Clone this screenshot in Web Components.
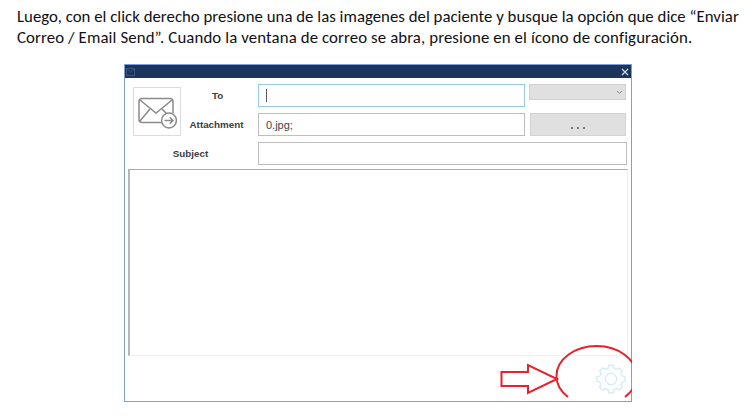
<!DOCTYPE html>
<html lang="es">
<head>
<meta charset="utf-8">
<title>Enviar Correo</title>
<style>
    html, body { margin: 0; background: #fff; }
    body { width: 750px; height: 416px; overflow: hidden; }
    .line-a { letter-spacing: 0.02px; }
    .line-b { letter-spacing: 0.115px; }
</style>
</head>
<body>
<doc-page>
    <doc-text><span class="line-a">Luego, con el click derecho presione una de las imagenes del paciente y busque la opción que dice “Enviar</span><br><span class="line-b">Correo / Email Send”. Cuando la ventana de correo se abra, presione en el ícono de configuración.</span></doc-text>
    <mail-window></mail-window>
</doc-page>

<script>
class DocPage extends HTMLElement {
    constructor() {
        super();
        this.attachShadow({ mode: 'open' });
        this.shadowRoot.innerHTML = `
            <style>
                :host {
                    display: flex;
                    flex-direction: column;
                    gap: 16px;
                    padding: 7px 0 0 17px;
                    box-sizing: border-box;
                    width: 750px;
                    height: 416px;
                }
            </style>
            <slot></slot>
        `;
    }
}

class DocText extends HTMLElement {
    constructor() {
        super();
        this.attachShadow({ mode: 'open' });
        this.shadowRoot.innerHTML = `
            <style>
                :host {
                    display: block;
                    width: 728px;
                    font: 16.8px/20.5px Carlito, Lato, "Open Sans", sans-serif;
                    color: #101014;
                }
            </style>
            <slot></slot>
        `;
    }
}

class FormLabel extends HTMLElement {
    constructor() {
        super();
        this.attachShadow({ mode: 'open' });
        this.shadowRoot.innerHTML = `
            <style>
                :host {
                    display: flex;
                    align-items: center;
                    justify-content: center;
                    font: bold 9.8px "Liberation Sans", Arial, sans-serif;
                    color: #3c3c3c;
                }
            </style>
            <slot></slot>
        `;
    }
}

class FormInput extends HTMLElement {
    constructor() {
        super();
        this.attachShadow({ mode: 'open' });
        this.shadowRoot.innerHTML = `
            <style>
                :host {
                    display: flex;
                    align-items: center;
                    box-sizing: border-box;
                    padding-left: 7px;
                    border: 1px solid #bdbdbd;
                    background: #fff;
                    font: 11px "Liberation Sans", Arial, sans-serif;
                    color: #444;
                }
                :host([focused]) {
                    border-color: #93c9f2;
                }
                :host([focused])::before {
                    content: "";
                    width: 1px;
                    height: 13px;
                    background: #555;
                }
            </style>
            <slot></slot>
        `;
    }
}

class MailWindow extends HTMLElement {
    constructor() {
        super();
        this.attachShadow({ mode: 'open' });
        this.shadowRoot.innerHTML = `
            <style>
                :host {
                    display: flex;
                    flex-direction: column;
                    position: relative;
                    box-sizing: border-box;
                    width: 508px;
                    height: 338px;
                    margin-left: 107px;
                    border: 1px solid #7d9ed8;
                    background: #fff;
                }
                .title {
                    display: flex;
                    align-items: center;
                    justify-content: space-between;
                    flex: none;
                    height: 13px;
                    padding: 0 2px 0 1px;
                    background: #1b355f;
                }
                .form {
                    display: grid;
                    grid-template-columns: 48px 77px 267px 101px;
                    grid-template-rows: 23px 23px 23px;
                    row-gap: 6px;
                    column-gap: 0;
                    padding: 6px 0 0 8px;
                }
                .logo {
                    grid-row: 1 / span 2;
                    box-sizing: border-box;
                    height: 49px;
                    margin-top: 3px;
                    border: 1px solid #dcdcdc;
                    display: flex;
                    align-items: center;
                    justify-content: center;
                }
                .select {
                    margin-left: 4px;
                    height: 16px;
                    box-sizing: border-box;
                    border: 1px solid #cfcfcf;
                    background: #e0e0e0;
                    display: flex;
                    align-items: center;
                    justify-content: flex-end;
                    padding-right: 2px;
                }
                .browse {
                    margin-left: 5px;
                    box-sizing: border-box;
                    border: 1px solid #d2d2d2;
                    background: #e0e0e0;
                    display: flex;
                    align-items: flex-end;
                    justify-content: center;
                    padding-bottom: 6px;
                    gap: 4px;
                }
                .browse i {
                    width: 2px;
                    height: 2px;
                    background: #777;
                }
                .attachment-label {
                    grid-column: 2;
                    padding-right: 6px;
                }
                .subject-label {
                    grid-column: 1 / span 2;
                    padding-right: 10px;
                }
                .subject-input {
                    grid-column: 3 / span 2;
                    margin-right: -1px;
                }
                .body {
                    box-sizing: border-box;
                    flex: none;
                    height: 187px;
                    margin: 4px 3px 0 3px;
                    border-top: 1px solid #ababab;
                    border-left: 2px solid #b5b5b5;
                    border-right: 1px solid #ededed;
                    border-bottom: 1px solid #f0f0f0;
                }
                .to-label { padding: 0 4px 1px 0; }
                .marks {
                    position: absolute;
                    left: -1px;
                    top: -1px;
                    width: 508px;
                    height: 338px;
                    pointer-events: none;
                }
            </style>
            <div class="title">
                <svg width="9" height="8" viewBox="0 0 9 8" fill="none" stroke="#3c5478" stroke-width="1">
                    <rect x="0.5" y="0.5" width="8" height="7"/>
                    <path d="M0.5 0.5 L4.5 4 L8.5 0.5"/>
                </svg>
                <svg width="8" height="8" viewBox="0 0 8 8" fill="none" stroke="#d5dbe6" stroke-width="1.2">
                    <path d="M1 1 L7 7 M7 1 L1 7"/>
                </svg>
            </div>
            <div class="form">
                <div class="logo">
                    <svg width="40" height="36" viewBox="0 0 40 36" fill="none" stroke="#8b8b8b" stroke-width="1.5">
                        <path d="M26 28.500 H5 Q2 28.500 2 25.500 V7.500 Q2 4.500 5 4.500 H33 Q36 4.500 36 7.500 V19"/>
                        <path d="M3 6 L19 19 L35 6"/>
                        <path d="M3 27 L13 15 M25 15 L30 20"/>
                        <circle cx="32" cy="26.500" r="7.400" fill="#fff"/>
                        <path d="M27.500 26.500 H36 M32.800 23.300 L36 26.500 L32.800 29.700"/>
                    </svg>
                </div>
                <form-label class="to-label">To</form-label>
                <form-input focused></form-input>
                <div class="select">
                    <svg width="7" height="5" viewBox="0 0 7 5" fill="none" stroke="#888" stroke-width="1">
                        <path d="M1 1 L3.5 3.5 L6 1"/>
                    </svg>
                </div>

                <form-label class="attachment-label">Attachment</form-label>
                <form-input>0.jpg;</form-input>
                <div class="browse"><i></i><i></i><i></i></div>

                <form-label class="subject-label">Subject</form-label>
                <form-input class="subject-input"></form-input>
            </div>
            <div class="body"></div>

            <svg class="marks" viewBox="0 0 508 338" fill="none">
                <path d="M377.5 308 H404 V301 L433 315 L404 329 V322 H377.5 Z" stroke="#e8212b" stroke-width="2" fill="#fff"/>
                <g transform="translate(487 315) scale(.76) translate(-487 -315)" stroke="#d6edfb" stroke-width="2">
                    <path d="M484 297 H490 L491 301 L494 302.500 L498 300.500 L502 304.500 L500 308 L501.500 311 L505.500 312 V318 L501.500 319 L500 322 L502 325.500 L498 329.500 L494 327.500 L491 329 L490 333 H484 L483 329 L480 327.500 L476 329.500 L472 325.500 L474 322 L472.500 319 L468.500 318 V312 L472.500 311 L474 308 L472 304.500 L476 300.500 L480 302.500 L483 301 Z"/>
                    <circle cx="487" cy="315" r="7.500"/>
                </g>
                <path d="M444 333 A40 30 0 1 1 501 333" stroke="#e8212b" stroke-width="2"/>
            </svg>
        `;
    }
}

customElements.define('doc-page', DocPage);
customElements.define('doc-text', DocText);
customElements.define('form-label', FormLabel);
customElements.define('form-input', FormInput);
customElements.define('mail-window', MailWindow);
</script>
</body>
</html>
